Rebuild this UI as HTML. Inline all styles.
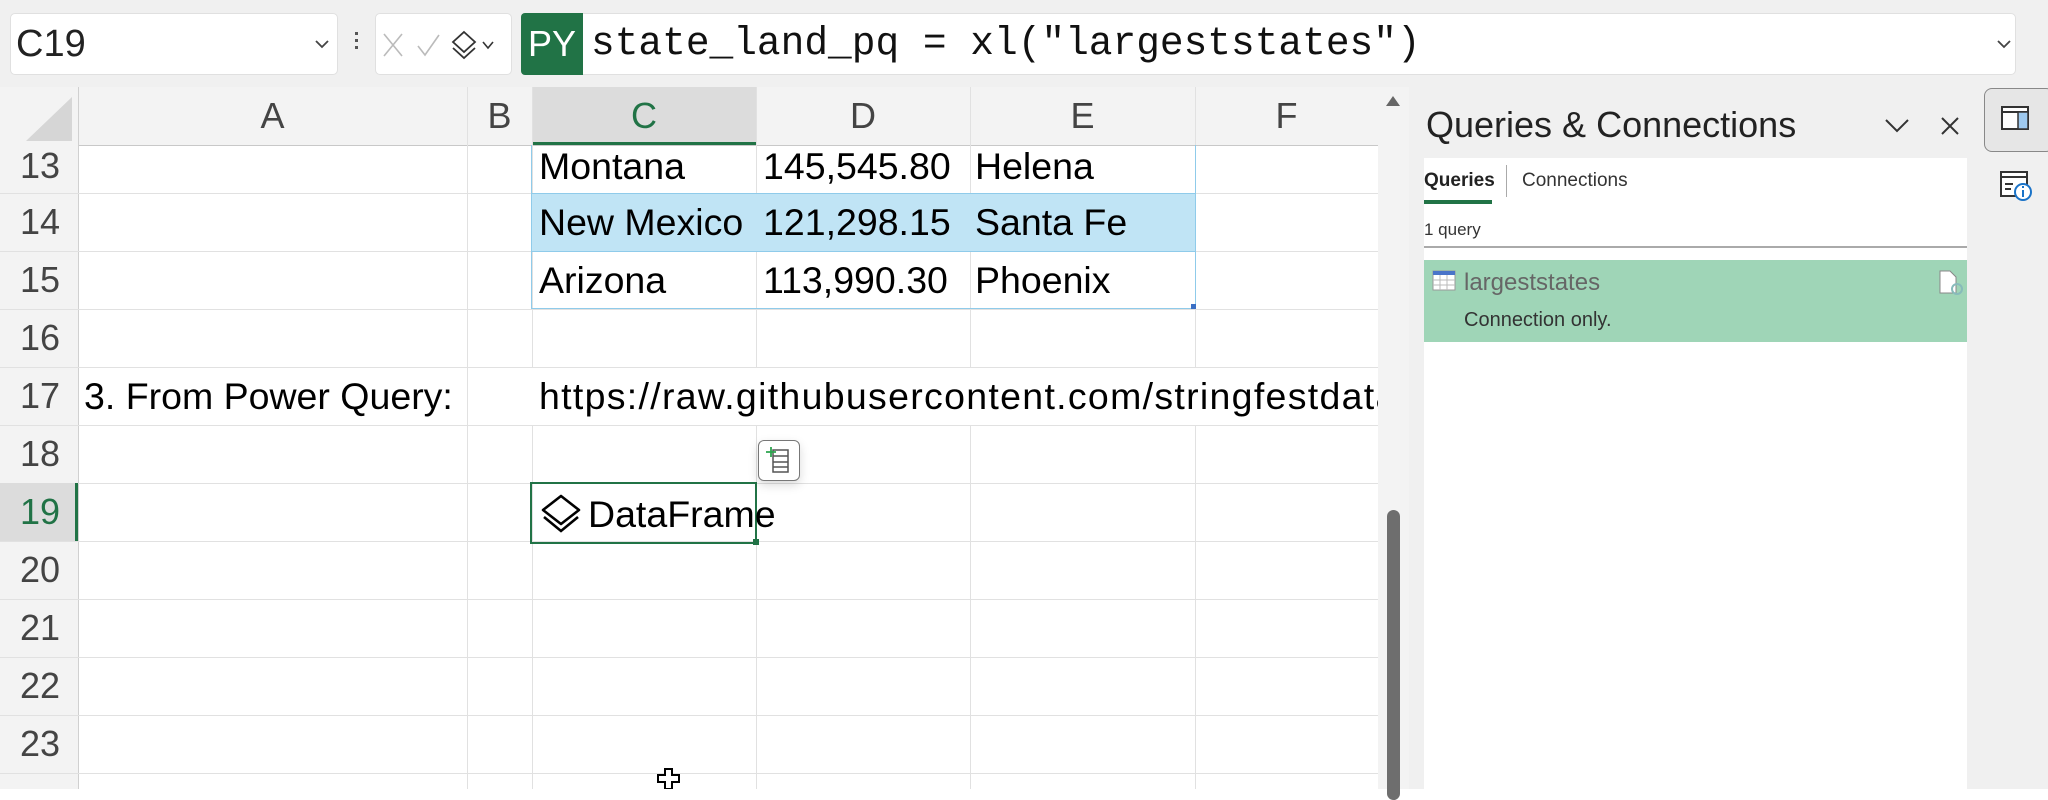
<!DOCTYPE html>
<html><head><meta charset="utf-8"><style>
*{margin:0;padding:0;box-sizing:border-box}
body{width:2048px;height:789px;overflow:hidden;background:#fff;font-family:"Liberation Sans",sans-serif;position:relative}
.a{position:absolute}
.top{left:0;top:0;width:2048px;height:87px;background:#f0f0f0}
.box{background:#fff;border:1px solid #e0e0e0;border-radius:5px}
.hl{position:absolute;left:0;width:1378px;height:1px;background:#e1e1e1}
.vl{position:absolute;top:87px;width:1px;height:702px;background:#e1e1e1}
.rn{position:absolute;left:0;width:78px;height:58px;text-align:right;padding-right:18px;font-size:36px;color:#444;line-height:58px}
.ch{position:absolute;top:87px;height:58px;font-size:36px;color:#444;text-align:center;line-height:58px}
.c{position:absolute;font-size:37.5px;color:#000;line-height:58px;white-space:nowrap}
</style></head><body>
<div class="a top"></div>
<div class="a box" style="left:10px;top:13px;width:328px;height:62px"></div>
<div class="a" style="left:16px;top:13px;font-size:38px;line-height:62px;color:#222">C19</div>
<svg class="a" style="left:314px;top:38px" width="16" height="12"><path d="M2 3l6 6 6-6" stroke="#444" stroke-width="1.8" fill="none"/></svg>
<div class="a" style="left:355px;top:32px;width:3px;height:3px;background:#555;box-shadow:0 7px #555,0 14px #555"></div>
<div class="a box" style="left:375px;top:13px;width:137px;height:62px"></div>
<svg class="a" style="left:380px;top:28px" width="130" height="34"><path d="M4 6l18 22M22 6L4 28" stroke="#bbb" stroke-width="1.6"/><path d="M38 18l7 9 14-20" stroke="#bbb" stroke-width="1.6" fill="none"/><path d="M84 4l11 10-11 10-11-10z M73 20l11 10 11-10" stroke="#333" stroke-width="1.8" fill="none"/><path d="M103 14l5 6 5-6" stroke="#333" stroke-width="1.6" fill="none"/></svg>
<div class="a box" style="left:521px;top:13px;width:1495px;height:62px"></div>
<div class="a" style="left:521px;top:13px;width:62px;height:62px;background:#217346;border-radius:4px 0 0 4px;color:#fff;font-size:36px;line-height:62px;text-align:center">PY</div>
<div class="a" style="left:591px;top:13px;font-family:'Liberation Mono',monospace;font-size:39.5px;line-height:62px;color:#111">state_land_pq = xl("largeststates")</div>
<svg class="a" style="left:1996px;top:38px" width="16" height="12"><path d="M2 3l6 6 6-6" stroke="#444" stroke-width="1.8" fill="none"/></svg>

<div class="a" style="left:0;top:87px;width:1378px;height:58px;background:#f3f3f3"></div>
<div class="a" style="left:0;top:87px;width:78px;height:702px;background:#f3f3f3"></div>
<svg class="a" style="left:20px;top:95px" width="56" height="48"><path d="M52 2v44H6z" fill="#d6d6d6"/></svg>
<div class="a" style="left:532px;top:87px;width:224px;height:58px;background:#dcdcdc;border-bottom:3px solid #217346"></div>
<div class="ch" style="left:78px;width:389px">A</div>
<div class="ch" style="left:467px;width:65px">B</div>
<div class="ch" style="left:532px;width:224px;color:#217346">C</div>
<div class="ch" style="left:756px;width:214px">D</div>
<div class="ch" style="left:970px;width:225px">E</div>
<div class="ch" style="left:1195px;width:183px">F</div>
<div class="a" style="left:78px;top:145px;width:1300px;height:1px;background:#c8c8c8"></div>
<div class="a" style="left:78px;top:87px;width:1px;height:702px;background:#d0d0d0"></div>

<div class="vl" style="left:467px"></div><div class="vl" style="left:532px"></div><div class="vl" style="left:756px"></div><div class="vl" style="left:970px"></div><div class="vl" style="left:1195px"></div>
<div class="hl" style="top:193px"></div><div class="hl" style="top:251px"></div><div class="hl" style="top:309px"></div><div class="hl" style="top:367px"></div><div class="hl" style="top:425px"></div><div class="hl" style="top:483px"></div><div class="hl" style="top:541px"></div><div class="hl" style="top:599px"></div><div class="hl" style="top:657px"></div><div class="hl" style="top:715px"></div><div class="hl" style="top:773px"></div>

<div class="a" style="left:0;top:483px;width:78px;height:58px;background:#dcdcdc;border-right:3px solid #217346"></div>
<div class="rn" style="top:137px">13</div><div class="rn" style="top:193px">14</div><div class="rn" style="top:251px">15</div><div class="rn" style="top:309px">16</div><div class="rn" style="top:367px">17</div><div class="rn" style="top:425px">18</div><div class="rn" style="top:483px;color:#217346">19</div><div class="rn" style="top:541px">20</div><div class="rn" style="top:599px">21</div><div class="rn" style="top:657px">22</div><div class="rn" style="top:715px">23</div>

<div class="a" style="left:532px;top:193px;width:663px;height:58px;background:#c0e4f5"></div>
<div class="a" style="left:531px;top:145px;width:665px;height:164px;border:1px solid #8fcbea;border-top:none"></div>
<div class="a" style="left:531px;top:193px;width:665px;height:1px;background:#8fcbea"></div>
<div class="a" style="left:531px;top:251px;width:665px;height:1px;background:#8fcbea"></div>
<div class="a" style="left:1191px;top:304px;width:5px;height:5px;background:#3a6fc4"></div>
<div class="c" style="left:539px;top:137px">Montana</div><div class="c" style="left:763px;top:137px">145,545.80</div><div class="c" style="left:975px;top:137px">Helena</div>
<div class="c" style="left:539px;top:193px">New Mexico</div><div class="c" style="left:763px;top:193px">121,298.15</div><div class="c" style="left:975px;top:193px">Santa Fe</div>
<div class="c" style="left:539px;top:251px">Arizona</div><div class="c" style="left:763px;top:251px">113,990.30</div><div class="c" style="left:975px;top:251px">Phoenix</div>
<div class="c" style="left:84px;top:367px">3. From Power Query:</div>
<div class="a" style="left:532px;top:368px;width:846px;height:57px;overflow:hidden;background:#fff"><div class="c" style="left:7px;top:-1px;letter-spacing:1.3px">https://raw.githubusercontent.com/stringfestdata</div></div>

<div class="a" style="left:530px;top:482px;width:227px;height:62px;border:2.5px solid #217346"></div>
<div class="a" style="left:753px;top:539px;width:6px;height:6px;background:#217346"></div>
<svg class="a" style="left:540px;top:493px" width="42" height="42"><path d="M21 3l18 14-18 14L3 17z" stroke="#000" stroke-width="2.6" fill="none" stroke-linejoin="round"/><path d="M4 24l17 14 17-14" stroke="#000" stroke-width="2.6" fill="none"/></svg>
<div class="c" style="left:588px;top:485px">DataFrame</div>
<div class="a" style="left:758px;top:440px;width:42px;height:41px;background:#fff;border:1.5px solid #777;border-radius:6px;box-shadow:0 4px 10px rgba(0,0,0,.15)"></div>
<svg class="a" style="left:764px;top:445px" width="30" height="30"><path d="M9 5h15v22H9z M9 11h15 M9 17h15 M9 22h15" stroke="#555" stroke-width="1.5" fill="none"/><path d="M7 2v10M2 7h10" stroke="#2da44e" stroke-width="1.8"/></svg>
<svg class="a" style="left:656px;top:767px" width="26" height="22"><path d="M9 2h7v6h7v7h-7v7H9v-7H2V8h7z" stroke="#000" stroke-width="2" fill="#fff"/></svg>

<div class="a" style="left:1378px;top:87px;width:31px;height:702px;background:#f3f3f3"></div>
<svg class="a" style="left:1384px;top:94px" width="18" height="14"><path d="M9 2l7 10H2z" fill="#666"/></svg>
<div class="a" style="left:1387px;top:510px;width:13px;height:290px;background:#6e6e6e;border-radius:7px"></div>

<div class="a" style="left:1409px;top:87px;width:567px;height:702px;background:#f0f0f0"></div>
<div class="a" style="left:1426px;top:100px;font-size:36px;color:#222;line-height:50px">Queries &amp; Connections</div>
<svg class="a" style="left:1882px;top:114px" width="30" height="22"><path d="M4 6l11 11 11-11" stroke="#333" stroke-width="2" fill="none"/></svg>
<svg class="a" style="left:1938px;top:114px" width="24" height="24"><path d="M4 4l16 16M20 4L4 20" stroke="#333" stroke-width="2"/></svg>
<div class="a" style="left:1424px;top:158px;width:543px;height:631px;background:#fff"></div>
<div class="a" style="left:1424px;top:167px;font-size:19px;font-weight:bold;color:#222;line-height:28px">Queries</div>
<div class="a" style="left:1424px;top:200px;width:68px;height:4px;background:#217346"></div>
<div class="a" style="left:1506px;top:165px;width:1px;height:32px;background:#aaa"></div>
<div class="a" style="left:1522px;top:167px;font-size:19px;color:#333;line-height:28px">Connections</div>
<div class="a" style="left:1424px;top:216px;font-size:17px;color:#333;line-height:28px">1 query</div>
<div class="a" style="left:1424px;top:246px;width:543px;height:2px;background:#aaa"></div>
<div class="a" style="left:1424px;top:260px;width:543px;height:82px;background:#9fd5b7"></div>
<svg class="a" style="left:1432px;top:270px" width="24" height="22"><rect x="1" y="1" width="22" height="19" fill="#fff" stroke="#999"/><rect x="1" y="1" width="22" height="4" fill="#4a74c9"/><path d="M1 10h22M1 15h22M8 5v15M15 5v15" stroke="#bbb"/></svg>
<div class="a" style="left:1464px;top:267px;font-size:24px;color:#666;line-height:32px">largeststates</div>
<div class="a" style="left:1464px;top:305px;font-size:20px;color:#333;line-height:30px">Connection only.</div>
<svg class="a" style="left:1938px;top:270px" width="26" height="26"><path d="M2 1h10l6 6v16H2z" fill="#fff" stroke="#888"/><circle cx="19" cy="19" r="5" fill="none" stroke="#8bb" stroke-width="2"/></svg>

<div class="a" style="left:1976px;top:87px;width:72px;height:702px;background:#f0f0f0"></div>
<div class="a" style="left:1984px;top:88px;width:70px;height:64px;background:#e6e6e6;border:1.5px solid #888;border-radius:8px"></div>
<svg class="a" style="left:2000px;top:104px" width="32" height="30"><rect x="2" y="3" width="26" height="22" fill="#fff" stroke="#333" stroke-width="2"/><path d="M2 8h26" stroke="#333" stroke-width="2"/><rect x="18" y="8" width="10" height="17" fill="#9ec9ef" stroke="#333" stroke-width="1.5"/></svg>
<svg class="a" style="left:1999px;top:170px" width="36" height="34"><rect x="2" y="2" width="26" height="24" fill="#fff" stroke="#333" stroke-width="2"/><path d="M2 7h26M6 14h8M6 19h6" stroke="#333" stroke-width="2"/><circle cx="24" cy="22" r="8" fill="#fff" stroke="#1a73c8" stroke-width="2"/><path d="M24 20v7M24 16v2" stroke="#1a73c8" stroke-width="2"/></svg>
</body></html>
